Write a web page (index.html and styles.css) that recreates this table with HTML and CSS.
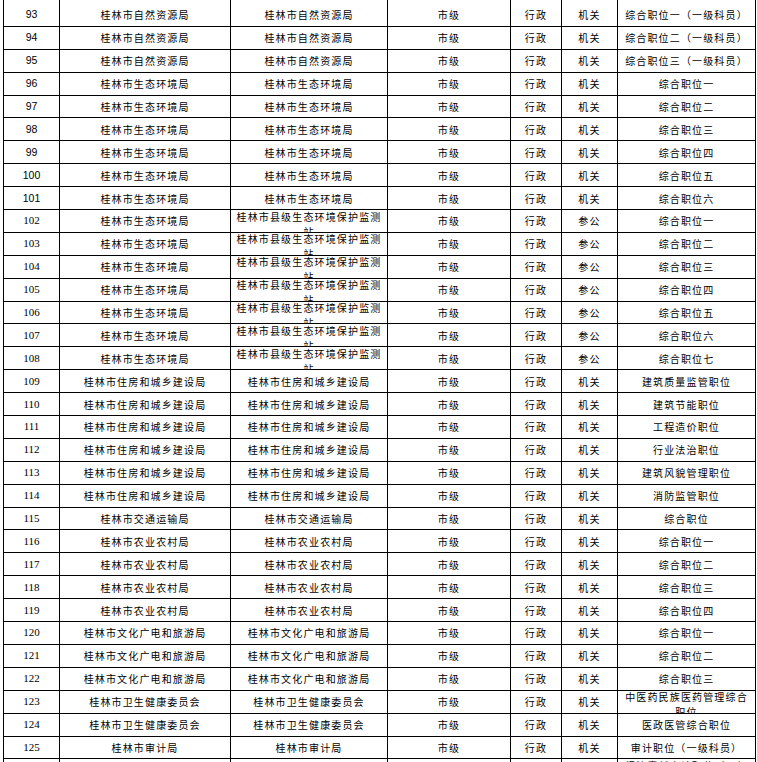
FILE: index.html
```html
<!DOCTYPE html>
<html lang="zh-CN">
<head>
<meta charset="utf-8">
<title>职位表</title>
<link rel="stylesheet" href="styles.css">
</head>
<body>
<div class="sheet">
  <div class="c top"></div><div class="c top"></div><div class="c top"></div><div class="c top"></div><div class="c top"></div><div class="c top"></div><div class="c top"></div>

  <div class="c n sans">93</div><div class="c">桂林市自然资源局</div><div class="c">桂林市自然资源局</div><div class="c">市级</div><div class="c">行政</div><div class="c">机关</div><div class="c">综合职位一（一级科员）</div>
  <div class="c n sans">94</div><div class="c">桂林市自然资源局</div><div class="c">桂林市自然资源局</div><div class="c">市级</div><div class="c">行政</div><div class="c">机关</div><div class="c">综合职位二（一级科员）</div>
  <div class="c n sans">95</div><div class="c">桂林市自然资源局</div><div class="c">桂林市自然资源局</div><div class="c">市级</div><div class="c">行政</div><div class="c">机关</div><div class="c">综合职位三（一级科员）</div>
  <div class="c n sans">96</div><div class="c">桂林市生态环境局</div><div class="c">桂林市生态环境局</div><div class="c">市级</div><div class="c">行政</div><div class="c">机关</div><div class="c">综合职位一</div>
  <div class="c n sans">97</div><div class="c">桂林市生态环境局</div><div class="c">桂林市生态环境局</div><div class="c">市级</div><div class="c">行政</div><div class="c">机关</div><div class="c">综合职位二</div>
  <div class="c n sans">98</div><div class="c">桂林市生态环境局</div><div class="c">桂林市生态环境局</div><div class="c">市级</div><div class="c">行政</div><div class="c">机关</div><div class="c">综合职位三</div>
  <div class="c n sans">99</div><div class="c">桂林市生态环境局</div><div class="c">桂林市生态环境局</div><div class="c">市级</div><div class="c">行政</div><div class="c">机关</div><div class="c">综合职位四</div>
  <div class="c n sans">100</div><div class="c">桂林市生态环境局</div><div class="c">桂林市生态环境局</div><div class="c">市级</div><div class="c">行政</div><div class="c">机关</div><div class="c">综合职位五</div>
  <div class="c n sans">101</div><div class="c">桂林市生态环境局</div><div class="c">桂林市生态环境局</div><div class="c">市级</div><div class="c">行政</div><div class="c">机关</div><div class="c">综合职位六</div>
  <div class="c n serif">102</div><div class="c">桂林市生态环境局</div><div class="c wrap"><span>桂林市县级生态环境保护监测站</span></div><div class="c">市级</div><div class="c">行政</div><div class="c">参公</div><div class="c">综合职位一</div>
  <div class="c n serif">103</div><div class="c">桂林市生态环境局</div><div class="c wrap"><span>桂林市县级生态环境保护监测站</span></div><div class="c">市级</div><div class="c">行政</div><div class="c">参公</div><div class="c">综合职位二</div>
  <div class="c n serif">104</div><div class="c">桂林市生态环境局</div><div class="c wrap"><span>桂林市县级生态环境保护监测站</span></div><div class="c">市级</div><div class="c">行政</div><div class="c">参公</div><div class="c">综合职位三</div>
  <div class="c n serif">105</div><div class="c">桂林市生态环境局</div><div class="c wrap"><span>桂林市县级生态环境保护监测站</span></div><div class="c">市级</div><div class="c">行政</div><div class="c">参公</div><div class="c">综合职位四</div>
  <div class="c n serif">106</div><div class="c">桂林市生态环境局</div><div class="c wrap"><span>桂林市县级生态环境保护监测站</span></div><div class="c">市级</div><div class="c">行政</div><div class="c">参公</div><div class="c">综合职位五</div>
  <div class="c n serif">107</div><div class="c">桂林市生态环境局</div><div class="c wrap"><span>桂林市县级生态环境保护监测站</span></div><div class="c">市级</div><div class="c">行政</div><div class="c">参公</div><div class="c">综合职位六</div>
  <div class="c n serif">108</div><div class="c">桂林市生态环境局</div><div class="c wrap"><span>桂林市县级生态环境保护监测站</span></div><div class="c">市级</div><div class="c">行政</div><div class="c">参公</div><div class="c">综合职位七</div>
  <div class="c n serif">109</div><div class="c">桂林市住房和城乡建设局</div><div class="c">桂林市住房和城乡建设局</div><div class="c">市级</div><div class="c">行政</div><div class="c">机关</div><div class="c">建筑质量监管职位</div>
  <div class="c n serif">110</div><div class="c">桂林市住房和城乡建设局</div><div class="c">桂林市住房和城乡建设局</div><div class="c">市级</div><div class="c">行政</div><div class="c">机关</div><div class="c">建筑节能职位</div>
  <div class="c n serif">111</div><div class="c">桂林市住房和城乡建设局</div><div class="c">桂林市住房和城乡建设局</div><div class="c">市级</div><div class="c">行政</div><div class="c">机关</div><div class="c">工程造价职位</div>
  <div class="c n serif">112</div><div class="c">桂林市住房和城乡建设局</div><div class="c">桂林市住房和城乡建设局</div><div class="c">市级</div><div class="c">行政</div><div class="c">机关</div><div class="c">行业法治职位</div>
  <div class="c n serif">113</div><div class="c">桂林市住房和城乡建设局</div><div class="c">桂林市住房和城乡建设局</div><div class="c">市级</div><div class="c">行政</div><div class="c">机关</div><div class="c">建筑风貌管理职位</div>
  <div class="c n serif">114</div><div class="c">桂林市住房和城乡建设局</div><div class="c">桂林市住房和城乡建设局</div><div class="c">市级</div><div class="c">行政</div><div class="c">机关</div><div class="c">消防监管职位</div>
  <div class="c n serif">115</div><div class="c">桂林市交通运输局</div><div class="c">桂林市交通运输局</div><div class="c">市级</div><div class="c">行政</div><div class="c">机关</div><div class="c">综合职位</div>
  <div class="c n serif">116</div><div class="c">桂林市农业农村局</div><div class="c">桂林市农业农村局</div><div class="c">市级</div><div class="c">行政</div><div class="c">机关</div><div class="c">综合职位一</div>
  <div class="c n serif">117</div><div class="c">桂林市农业农村局</div><div class="c">桂林市农业农村局</div><div class="c">市级</div><div class="c">行政</div><div class="c">机关</div><div class="c">综合职位二</div>
  <div class="c n serif">118</div><div class="c">桂林市农业农村局</div><div class="c">桂林市农业农村局</div><div class="c">市级</div><div class="c">行政</div><div class="c">机关</div><div class="c">综合职位三</div>
  <div class="c n serif">119</div><div class="c">桂林市农业农村局</div><div class="c">桂林市农业农村局</div><div class="c">市级</div><div class="c">行政</div><div class="c">机关</div><div class="c">综合职位四</div>
  <div class="c n serif">120</div><div class="c">桂林市文化广电和旅游局</div><div class="c">桂林市文化广电和旅游局</div><div class="c">市级</div><div class="c">行政</div><div class="c">机关</div><div class="c">综合职位一</div>
  <div class="c n serif">121</div><div class="c">桂林市文化广电和旅游局</div><div class="c">桂林市文化广电和旅游局</div><div class="c">市级</div><div class="c">行政</div><div class="c">机关</div><div class="c">综合职位二</div>
  <div class="c n serif">122</div><div class="c">桂林市文化广电和旅游局</div><div class="c">桂林市文化广电和旅游局</div><div class="c">市级</div><div class="c">行政</div><div class="c">机关</div><div class="c">综合职位三</div>
  <div class="c n serif">123</div><div class="c">桂林市卫生健康委员会</div><div class="c">桂林市卫生健康委员会</div><div class="c">市级</div><div class="c">行政</div><div class="c">机关</div><div class="c wrap"><span>中医药民族医药管理综合职位</span></div>
  <div class="c n serif">124</div><div class="c">桂林市卫生健康委员会</div><div class="c">桂林市卫生健康委员会</div><div class="c">市级</div><div class="c">行政</div><div class="c">机关</div><div class="c">医政医管综合职位</div>
  <div class="c n serif">125</div><div class="c">桂林市审计局</div><div class="c">桂林市审计局</div><div class="c">市级</div><div class="c">行政</div><div class="c">机关</div><div class="c">审计职位（一级科员）</div>
  <div class="c n serif">126</div><div class="c">桂林市审计局</div><div class="c">桂林市审计局</div><div class="c">市级</div><div class="c">行政</div><div class="c">机关</div><div class="c wrap"><span>经济责任审计职位（一级科员）</span></div>
</div>
</body>
</html>
```
FILE: styles.css
```css
html, body {
  margin: 0;
  padding: 0;
  background: #fff;
  overflow: hidden;
}

body {
  width: 757px;
  height: 762px;
  color: #000;
  font-family: "Noto Sans CJK SC", "Noto Sans", sans-serif;
  font-size: 10px;
  letter-spacing: 1.15px;
}

.sheet {
  display: grid;
  grid-template-columns: 56px 171px 157px 123px 51px 56px 138px;
  grid-auto-rows: 22.9px;
  margin-top: -18.9px;
  margin-left: 3px;
  width: max-content;
  border-left: 1px solid #000;
}

.c {
  box-sizing: border-box;
  border-right: 1px solid #000;
  border-bottom: 1px solid #000;
  display: flex;
  align-items: center;
  justify-content: center;
  text-align: center;
  overflow: hidden;
  white-space: nowrap;
  line-height: 13px;
  padding: 0 3px;
}

.c.top {
  border-bottom: none;
}

.c.wrap {
  white-space: normal;
  align-items: flex-start;
  line-height: 15px;
}

.c.wrap span {
  display: block;
  margin-top: -1.5px;
}

.n {
  letter-spacing: 0;
}

.n.sans {
  font-family: "Liberation Sans", Arial, sans-serif;
  font-size: 10.5px;
}

.n.serif {
  font-family: "Liberation Serif", "Times New Roman", serif;
  font-size: 11px;
}
```
